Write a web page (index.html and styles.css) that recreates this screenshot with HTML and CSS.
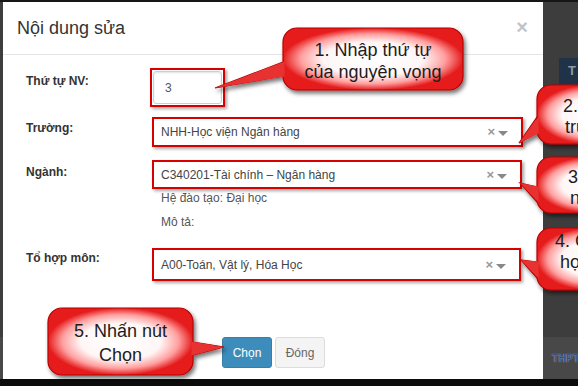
FILE: index.html
```html
<!DOCTYPE html>
<html lang="vi">
<head>
<meta charset="utf-8">
<title>Nội dung sửa</title>
<link rel="stylesheet" href="styles.css">
</head>
<body>
<div class="app">
  <div class="app-main"><div class="tab">T</div></div>
  <div class="app-footer"><span class="brand">THPT</span></div>
</div>

<div class="modal">
  <div class="modal-header">
    <h4 class="modal-title">Nội dung sửa</h4>
    <span class="close">×</span>
  </div>
  <div class="modal-body">
    <div class="row r1">
      <label class="lbl">Thứ tự NV:</label>
      <div class="ctl">
        <div class="mark mark-input"><div class="input">3</div></div>
      </div>
    </div>
    <div class="row r2">
      <label class="lbl">Trường:</label>
      <div class="ctl">
        <div class="mark select s2"><span class="val">NHH-Học viện Ngân hàng</span><span class="clear">×</span><span class="arrow"></span></div>
      </div>
    </div>
    <div class="row r3">
      <label class="lbl">Ngành:</label>
      <div class="ctl">
        <div class="mark select s3"><span class="val">C340201-Tài chính – Ngân hàng</span><span class="clear">×</span><span class="arrow"></span></div>
        <div class="help">
          <div>Hệ đào tạo: Đại học</div>
          <div>Mô tả:</div>
        </div>
      </div>
    </div>
    <div class="row r4">
      <label class="lbl">Tổ hợp môn:</label>
      <div class="ctl">
        <div class="mark select s4"><span class="val">A00-Toán, Vật lý, Hóa Học</span><span class="clear">×</span><span class="arrow"></span></div>
      </div>
    </div>
  </div>
  <div class="modal-footer">
    <button class="btn btn-primary">Chọn</button>
    <button class="btn btn-default">Đóng</button>
  </div>
</div>

<svg class="callouts" width="578" height="386" viewBox="0 0 578 386">
  <defs>
    <radialGradient id="bg" cx="50%" cy="50%" r="50%">
      <stop offset="0%" stop-color="#ffffff"/>
      <stop offset="55%" stop-color="#fff6f6"/>
      <stop offset="80%" stop-color="#ffa0a0"/>
      <stop offset="100%" stop-color="#e61e1e"/>
    </radialGradient>
    <filter id="sh" x="-20%" y="-20%" width="140%" height="150%">
      <feDropShadow dx="2" dy="3" stdDeviation="2" flood-color="#000" flood-opacity="0.55"/>
    </filter>
  </defs>
  <g filter="url(#sh)">
    <path class="tail" d="M283 62 L215 88 L283 76 Z"/>
    <rect class="bub" x="283" y="28" width="180" height="62" rx="14"/>
    <path class="tail-fill" d="M284.5 61.5 L215 88 L284.5 76.5 Z"/>
  </g>
  <g filter="url(#sh)">
    <path class="tail" d="M537 117 L519 143 L537 133 Z"/>
    <rect class="bub" x="537" y="85" width="110" height="59" rx="14"/>
    <path class="tail-fill" d="M538.5 116.5 L519 143 L538.5 133.5 Z"/>
  </g>
  <g filter="url(#sh)">
    <path class="tail" d="M537 187 L520 183 L537 202 Z"/>
    <rect class="bub" x="537" y="157" width="110" height="56" rx="14"/>
    <path class="tail-fill" d="M538.5 186.5 L520 183 L538.5 202.5 Z"/>
  </g>
  <g filter="url(#sh)">
    <path class="tail" d="M537 262 L521 260 L537 278 Z"/>
    <rect class="bub" x="537" y="228" width="110" height="62" rx="14"/>
    <path class="tail-fill" d="M538.5 261.5 L521 260 L538.5 278.5 Z"/>
  </g>
  <g filter="url(#sh)">
    <path class="tail" d="M193 342 L224 347 L193 355 Z"/>
    <rect class="bub" x="48" y="308" width="145" height="67" rx="14"/>
    <path class="tail-fill" d="M191.5 341.5 L224 347 L191.5 355.5 Z"/>
  </g>
</svg>

<div class="ct c1"><span>1. Nhập thứ tự</span><span>của nguyện vọng</span></div>
<div class="ct-r c2"><span class="l1">2. Chọn</span><span class="l2">trường</span></div>
<div class="ct-r c3"><span class="l1">3. Chọn</span><span class="l2">ngành</span></div>
<div class="ct-r c4"><span class="l1">4. Chọn tổ</span><span class="l2">hợp môn</span></div>
<div class="ct c5"><span>5. Nhấn nút</span><span>Chọn</span></div>
</body>
</html>
```

FILE: styles.css
```css
* { box-sizing: border-box; }

html, body {
  margin: 0;
  padding: 0;
}

body {
  width: 578px;
  height: 386px;
  overflow: hidden;
  position: relative;
  font-family: "Liberation Sans", Arial, sans-serif;
  background: #3c3c3c;
}

/* background application (dimmed) */
.app {
  height: 386px;
  display: flex;
  flex-direction: column;
  background: #3d3d3d;
  border-top: 2px solid #161616;
  border-bottom: 7px solid #0c0c0c;
}

.app-main {
  flex: 1;
  padding: 56px 0 0 559px;
}

.tab {
  width: 30px;
  height: 26px;
  background: #1f3248;
  color: #8f98a3;
  font-size: 13px;
  font-weight: bold;
  line-height: 26px;
  padding-left: 9px;
}

.app-footer {
  height: 42px;
  background: #484848;
  display: flex;
  align-items: center;
  padding-left: 552px;
}

.brand {
  font-size: 10px;
  font-weight: bold;
  color: #35508a;
  letter-spacing: 0.3px;
  text-shadow: 0 0 1px #c9d0e0;
}

/* modal */
.modal {
  position: absolute;
  left: 3px;
  top: 2px;
  width: 540px;
  height: 377px;
  background: #fff;
}

.modal-header {
  height: 53px;
  border-bottom: 1px solid #e5e5e5;
  display: flex;
  align-items: center;
  justify-content: space-between;
  padding: 0 15px 0 14px;
}

.modal-title {
  margin: 0;
  font-size: 18px;
  font-weight: normal;
  color: #333;
  line-height: 20px;
}

.close {
  font-size: 20px;
  font-weight: bold;
  color: #c4c4c4;
  line-height: 20px;
  margin-top: -2px;
}

.modal-body {
  padding-top: 13px;
}

.row {
  display: grid;
  grid-template-columns: 149px 375px;
}

.lbl {
  padding-left: 23px;
  font-size: 12px;
  font-weight: bold;
  color: #333;
  line-height: 16px;
}

.r1 .lbl { padding-top: 5px; }
.r2 { margin-top: 10px; }
.r2 .lbl { padding-top: 3px; }
.r3 { margin-top: 13px; }
.r3 .lbl { padding-top: 4px; }
.r4 { margin-top: 14px; }
.r4 .lbl { padding-top: 2px; }

.mark {
  border: 2px solid #d60000;
  background: #fff;
  box-shadow: 2px 2px 3px rgba(0, 0, 0, 0.35);
}

.mark-input {
  width: 75px;
  height: 39px;
  margin-left: -2px;
  padding: 1px;
}

.input {
  height: 100%;
  border: 1px solid #cfcfcf;
  border-radius: 3px;
  box-shadow: inset 0 1px 2px rgba(0, 0, 0, 0.12);
  font-size: 12px;
  color: #555;
  padding-left: 11px;
  display: flex;
  align-items: center;
}

.select {
  display: flex;
  align-items: center;
  padding: 0 13px 0 7px;
  font-size: 12px;
  color: #444;
}

.s2 { width: 371px; height: 30px; }
.s3 { width: 370px; height: 29px; }
.s4 { width: 369px; height: 33px; }

.val { flex: 1; }

.clear {
  font-size: 13px;
  font-weight: bold;
  color: #999;
  line-height: 12px;
  margin-right: 3px;
}

.arrow {
  width: 0;
  height: 0;
  border-left: 5px solid transparent;
  border-right: 5px solid transparent;
  border-top: 5px solid #888;
  margin-top: 3px;
}

.help {
  margin-top: -3px;
  padding-left: 9px;
  font-size: 12px;
  color: #555;
  line-height: 24px;
}

.modal-footer {
  margin-top: 56px;
  padding-left: 219px;
  display: flex;
  gap: 3px;
}

.btn {
  height: 31px;
  width: 50px;
  border-radius: 3px;
  font-family: "Liberation Sans", Arial, sans-serif;
  font-size: 12px;
  padding: 0;
}

.btn-primary {
  background: #3c8dbc;
  border: 1px solid #367fa9;
  color: #fff;
}

.btn-default {
  background: #f4f4f4;
  border: 1px solid #dcdcdc;
  color: #666;
}

/* callouts */
.callouts {
  position: absolute;
  left: 0;
  top: 0;
  overflow: visible;
  pointer-events: none;
}

.bub {
  fill: url(#bg);
  stroke: #b80000;
  stroke-width: 1.2;
}

.tail {
  fill: #e83232;
  stroke: #b80000;
  stroke-width: 1.2;
}

.tail-fill {
  fill: #e83232;
}

.ct {
  position: absolute;
  display: flex;
  flex-direction: column;
  align-items: center;
  justify-content: center;
  font-size: 18px;
  color: #1c1c1c;
}

.c1 {
  left: 283px;
  top: 28px;
  width: 180px;
  height: 62px;
  line-height: 22px;
  padding-top: 4px;
}

.c5 {
  left: 48px;
  top: 308px;
  width: 145px;
  height: 67px;
  line-height: 24px;
  padding-top: 3px;
}

.ct-r {
  position: absolute;
  left: 560px;
  display: flex;
  flex-direction: column;
  font-size: 18px;
  line-height: 21px;
  color: #1c1c1c;
  white-space: nowrap;
}

.c2 { top: 96px; }
.c2 .l1 { padding-left: 3px; }
.c2 .l2 { padding-left: 5px; }

.c3 { top: 167px; }
.c3 .l1 { padding-left: 8px; }
.c3 .l2 { padding-left: 10px; }

.c4 { top: 231px; left: 555px; }
.c4 .l2 { padding-left: 5px; }
```
